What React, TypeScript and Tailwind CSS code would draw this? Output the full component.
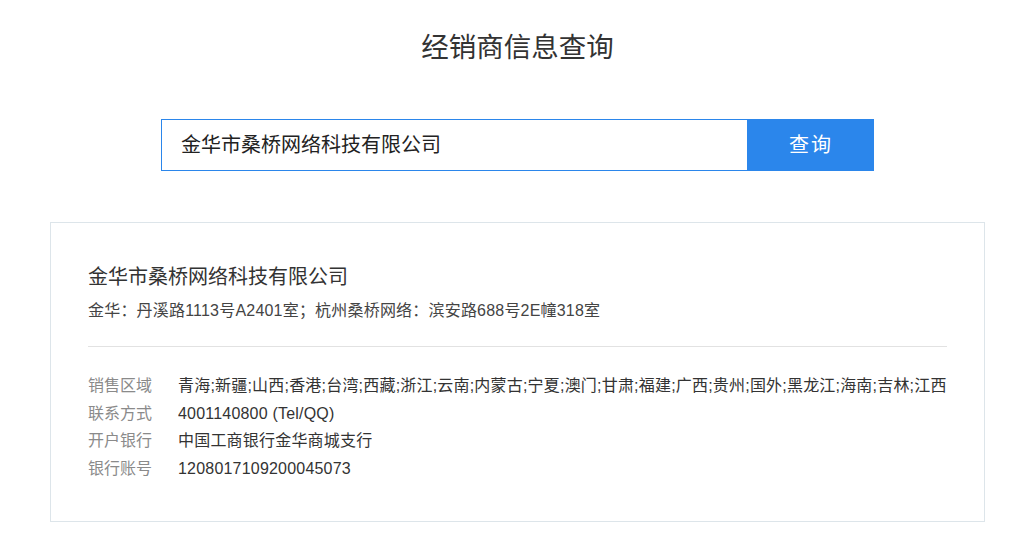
const font = "font-['Microsoft_YaHei','Liberation_Sans','Noto_Sans_CJK_SC',sans-serif]";

const rows: [string, string][] = [
  [
    "销售区域",
    "青海;新疆;山西;香港;台湾;西藏;浙江;云南;内蒙古;宁夏;澳门;甘肃;福建;广西;贵州;国外;黑龙江;海南;吉林;江西",
  ],
  ["联系方式", "4001140800 (Tel/QQ)"],
  ["开户银行", "中国工商银行金华商城支行"],
  ["银行账号", "1208017109200045073"],
];

export default function App() {
  return (
    <div className={`min-h-[551px] bg-white text-[#333] ${font}`}>
      <div className="ml-[50px] w-[935px] pt-[28px]">
        <h1 className="text-center text-[27.5px] leading-[40px] text-[#333]">经销商信息查询</h1>

        <div className="mx-auto mt-[51px] flex h-[52px] w-[713px]">
          <div className="flex flex-1 items-center border border-[#2b86eb] pl-[19px] text-[20px] text-[#222]">
            金华市桑桥网络科技有限公司
          </div>
          <button className="w-[126px] bg-[#2b86eb] text-[20px] tracking-[2px] text-white">查询</button>
        </div>

        <div className="mt-[51px] border border-[#dde5ea] px-[37px] pt-[39px] pb-[39px]">
          <div className="text-[20px] leading-[30px] text-[#333]">金华市桑桥网络科技有限公司</div>
          <div className="mt-[8px] text-[16px] leading-[22px] tracking-[0.2px] text-[#444]">
            金华：丹溪路1113号A2401室；杭州桑桥网络：滨安路688号2E幢318室
          </div>
          <div className="mt-[24px] mb-[25px] h-px bg-[#e2e2e2]" />
          <div className="flex flex-col">
            {rows.map(([k, v]) => (
              <div key={k} className="flex text-[16px] leading-[27.5px]">
                <span className="w-[90px] shrink-0 text-[#8a8a8a]">{k}</span>
                <span className="overflow-hidden whitespace-nowrap tracking-[0.2px] text-[#333]">{v}</span>
              </div>
            ))}
          </div>
        </div>
      </div>
    </div>
  );
}
